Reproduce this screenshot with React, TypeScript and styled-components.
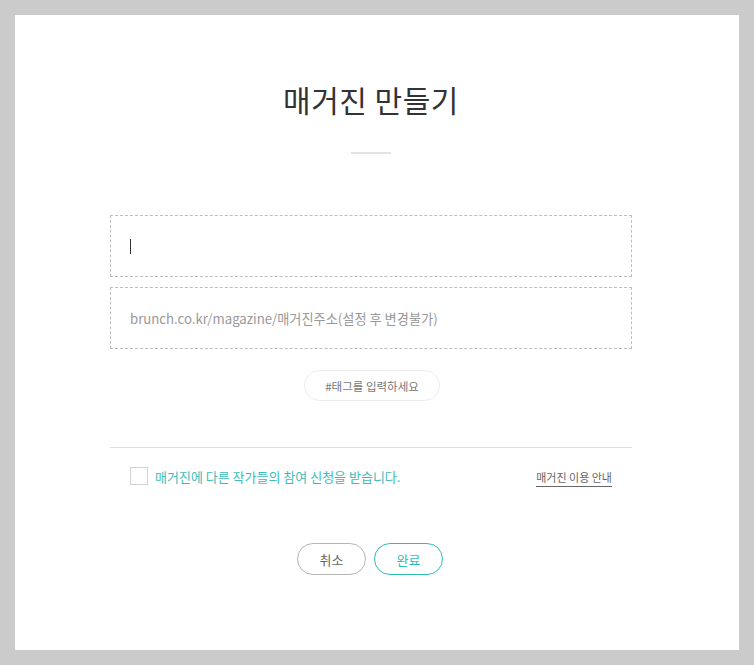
import React from "react";
import styled, { createGlobalStyle } from "styled-components";

const Global = createGlobalStyle`
  html, body { margin: 0; padding: 0; background: #cbcbcb; }
  body { font-family: "Noto Sans CJK KR", "Noto Sans", sans-serif; }
  * { box-sizing: border-box; }
`;

const Page = styled.div`
  width: 754px;
  height: 665px;
  padding: 15px;
  background: #cbcbcb;
`;

const Panel = styled.div`
  width: 724px;
  height: 635px;
  background: #fff;
  display: flex;
  flex-direction: column;
  align-items: center;
  padding-top: 60px;
  padding-right: 12px;
`;

const Title = styled.h1`
  margin: 0;
  font-size: 30px;
  font-weight: 400;
  color: #333;
  line-height: 48px;
  letter-spacing: 0.5px;
`;

const Divider = styled.div`
  width: 40px;
  height: 2px;
  background: #e3e3e3;
  margin-top: 29px;
`;

const Form = styled.div`
  width: 522px;
  margin-top: 61px;
  display: flex;
  flex-direction: column;
  gap: 10px;
`;

const Field = styled.div`
  height: 62px;
  border: 1px dashed #bdbdbd;
  display: flex;
  align-items: center;
  padding-left: 19px;
  font-size: 13.2px;
  color: #999;
`;

const Caret = styled.span`
  display: inline-block;
  width: 1px;
  height: 15px;
  background: #333;
`;

const TagRow = styled.div`
  display: flex;
  justify-content: center;
  padding-left: 2px;
  margin-top: 21px;
`;

const TagButton = styled.div`
  width: 136px;
  height: 31px;
  border: 1px solid #ececec;
  border-radius: 16px;
  display: flex;
  align-items: center;
  justify-content: center;
  font-size: 11.5px;
  color: #777;
`;

const Rule = styled.div`
  width: 522px;
  height: 1px;
  background: #dcdcdc;
  margin-top: 46px;
`;

const OptionRow = styled.div`
  width: 522px;
  display: flex;
  align-items: center;
  padding: 0 20px;
  margin-top: 18px;
  height: 20px;
`;

const Check = styled.span`
  width: 18px;
  height: 18px;
  border: 1px solid #d3d3d3;
  margin-right: 7px;
`;

const OptionText = styled.span`
  font-size: 13px;
  color: #3cbcb8;
  flex: 1;
`;

const GuideLink = styled.span`
  font-size: 11px;
  color: #666;
  border-bottom: 1px solid #666;
  line-height: 16px;
  padding-bottom: 1px;
  margin-top: 4px;
`;

const Buttons = styled.div`
  display: flex;
  gap: 8px;
  margin-top: 57px;
  padding-right: 2px;
`;

const Btn = styled.div<{ $primary?: boolean }>`
  width: 69px;
  height: 32px;
  border-radius: 16px;
  border: 1px solid ${(p) => (p.$primary ? "#2fbdb7" : "#b5b5b5")};
  color: ${(p) => (p.$primary ? "#2fbdb7" : "#666")};
  display: flex;
  align-items: center;
  justify-content: center;
  font-size: 13px;
`;

export default function App() {
  return (
    <Page>
      <Global />
      <Panel>
        <Title>매거진 만들기</Title>
        <Divider />
        <Form>
          <Field>
            <Caret />
          </Field>
          <Field>brunch.co.kr/magazine/매거진주소(설정 후 변경불가)</Field>
        </Form>
        <TagRow>
          <TagButton>#태그를 입력하세요</TagButton>
        </TagRow>
        <Rule />
        <OptionRow>
          <Check />
          <OptionText>매거진에 다른 작가들의 참여 신청을 받습니다.</OptionText>
          <GuideLink>매거진 이용 안내</GuideLink>
        </OptionRow>
        <Buttons>
          <Btn>취소</Btn>
          <Btn $primary>완료</Btn>
        </Buttons>
      </Panel>
    </Page>
  );
}
